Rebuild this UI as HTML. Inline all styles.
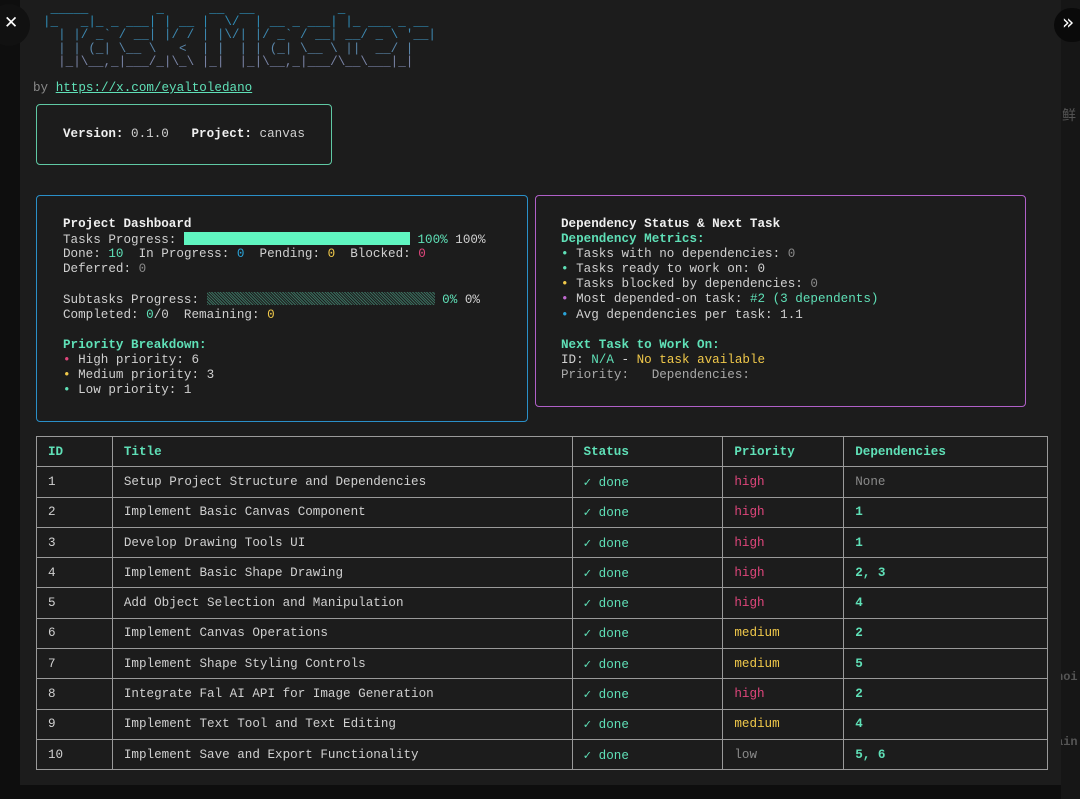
<!DOCTYPE html>
<html><head><meta charset="utf-8"><style>
*{margin:0;padding:0;box-sizing:border-box}
body{width:1080px;height:799px;background:#0e0e0e;position:relative;overflow:hidden;font-family:"Liberation Mono","DejaVu Sans Mono",monospace;font-size:12.6px;color:#d0d0d0}
.rstrip{position:absolute;left:1061px;top:0;width:19px;height:799px;background:#161616}
.panel{position:absolute;left:20px;top:0;width:1041px;height:785px;background:#1c1c1c}
.abs{position:absolute}
pre{font-family:inherit;white-space:pre}
.art{left:43px;top:3px;font-size:12.6px;line-height:13.2px;letter-spacing:0px}
.t{color:#5fe0b7}.p{color:#e0467c}.y{color:#f0c84a}.b{color:#2aa3d8}.m{color:#c06ad0}.g{color:#8a8a8a}.w{color:#f0f0f0;font-weight:bold}
.box{position:absolute;border:1.5px solid;border-radius:4px}
.lines div{height:15.1px;line-height:15.1px;white-space:pre}
table{position:absolute;left:36px;top:436px;width:1012px;border-collapse:collapse}
td{border:1.5px solid #9a9a9a;height:30.3px;padding:0 0 0 11px;white-space:pre;color:#d0d0d0}
th{border:1.5px solid #9a9a9a;height:30.3px;padding:0 0 0 11px;text-align:left;color:#5fe0b7}
</style></head><body>
<div class="rstrip"></div>
<div class="abs" style="left:1062px;top:105px;color:#555;font-size:14px">鲜</div>
<div class="abs" style="left:1056px;top:670px;color:#555;font-size:12px;font-weight:bold">noi</div>
<div class="abs" style="left:1056px;top:735px;color:#555;font-size:12px;font-weight:bold">ain</div>
<div class="panel"></div>
<div class="abs" style="left:-12px;top:4px;width:42px;height:42px;border-radius:21px;background:#111"></div>
<div class="abs" style="left:4px;top:13px;color:#fff;font-family:'Liberation Sans',sans-serif;font-size:17px">✕</div>
<div class="abs" style="left:1054px;top:8px;width:36px;height:34px;border-radius:17px;background:#0a0a0a"></div>
<div class="abs" style="left:1062px;top:10px;color:#fff;font-family:'DejaVu Sans',sans-serif;font-size:20px">»</div>
<pre class="abs art"><span style="color:#2f95c0"> _____         _      __  __           _
</span><span style="color:#2f8db8">|_   _|_ _ ___| | __ |  \/  | __ _ ___| |_ ___ _ __
</span><span style="color:#3d88b0">  | |/ _` / __| |/ / | |\/| |/ _` / __| __/ _ \ '__|
</span><span style="color:#5a86aa">  | | (_| \__ \   <  | |  | | (_| \__ \ ||  __/ |
</span><span style="color:#7a84a6">  |_|\__,_|___/_|\_\ |_|  |_|\__,_|___/\__\___|_|</span></pre>
<div class="abs" style="left:33px;top:81px;color:#8a8a8a">by <span class="t" style="text-decoration:underline">https://x.com/eyaltoledano</span></div>
<div class="box" style="left:36px;top:104px;width:296px;height:61px;border-color:#5fc9a4"></div>
<div class="abs" style="left:63px;top:127px;white-space:pre"><span class="w">Version:</span> 0.1.0   <span class="w">Project:</span> canvas</div>
<div class="box" style="left:36px;top:195px;width:492px;height:227px;border-color:#2a8fc8"></div>
<div class="abs lines" style="left:63px;top:217px">
<div class="w">Project Dashboard</div>
<div>Tasks Progress: <span style="display:inline-block;width:226px;height:13px;background:#5ff5c0;vertical-align:-2px"></span> <span class="t">100%</span> 100%</div>
<div>Done: <span class="t">10</span>  In Progress: <span class="b">0</span>  Pending: <span class="y">0</span>  Blocked: <span class="p">0</span></div>
<div>Deferred: <span class="g">0</span></div>
<div></div>
<div>Subtasks Progress: <span style="display:inline-block;width:228px;height:13px;background:repeating-linear-gradient(45deg,#3a6e5e 0 1px,#1c1c1c 1px 2px);vertical-align:-2px"></span> <span class="t">0%</span> 0%</div>
<div>Completed: <span class="t">0</span>/0  Remaining: <span class="y">0</span></div>
<div></div>
<div class="t" style="font-weight:bold">Priority Breakdown:</div>
<div><span class="p">•</span> High priority: 6</div>
<div><span class="y">•</span> Medium priority: 3</div>
<div><span class="t">•</span> Low priority: 1</div>
</div>
<div class="box" style="left:535px;top:195px;width:491px;height:212px;border-color:#b060c8"></div>
<div class="abs lines" style="left:561px;top:217px">
<div class="w">Dependency Status &amp; Next Task</div>
<div class="t" style="font-weight:bold">Dependency Metrics:</div>
<div><span class="t">•</span> Tasks with no dependencies: <span class="g">0</span></div>
<div><span class="t">•</span> Tasks ready to work on: 0</div>
<div><span class="y">•</span> Tasks blocked by dependencies: <span class="g">0</span></div>
<div><span class="m">•</span> Most depended-on task: <span class="t">#2 (3 dependents)</span></div>
<div><span class="b">•</span> Avg dependencies per task: 1.1</div>
<div></div>
<div class="t" style="font-weight:bold">Next Task to Work On:</div>
<div>ID: <span class="t">N/A</span> - <span class="y">No task available</span></div>
<div class="g" style="color:#a8a8a8">Priority:   Dependencies:</div>
</div>
<table>
<colgroup><col style="width:76px"><col style="width:460px"><col style="width:151px"><col style="width:121px"><col style="width:204px"></colgroup>
<tr><th>ID</th><th>Title</th><th>Status</th><th>Priority</th><th>Dependencies</th></tr>
<tr><td>1</td><td>Setup Project Structure and Dependencies</td><td class="t">✓ done</td><td class="p">high</td><td class="g">None</td></tr>
<tr><td>2</td><td>Implement Basic Canvas Component</td><td class="t">✓ done</td><td class="p">high</td><td class="t" style="font-weight:bold">1</td></tr>
<tr><td>3</td><td>Develop Drawing Tools UI</td><td class="t">✓ done</td><td class="p">high</td><td class="t" style="font-weight:bold">1</td></tr>
<tr><td>4</td><td>Implement Basic Shape Drawing</td><td class="t">✓ done</td><td class="p">high</td><td class="t" style="font-weight:bold">2, 3</td></tr>
<tr><td>5</td><td>Add Object Selection and Manipulation</td><td class="t">✓ done</td><td class="p">high</td><td class="t" style="font-weight:bold">4</td></tr>
<tr><td>6</td><td>Implement Canvas Operations</td><td class="t">✓ done</td><td class="y">medium</td><td class="t" style="font-weight:bold">2</td></tr>
<tr><td>7</td><td>Implement Shape Styling Controls</td><td class="t">✓ done</td><td class="y">medium</td><td class="t" style="font-weight:bold">5</td></tr>
<tr><td>8</td><td>Integrate Fal AI API for Image Generation</td><td class="t">✓ done</td><td class="p">high</td><td class="t" style="font-weight:bold">2</td></tr>
<tr><td>9</td><td>Implement Text Tool and Text Editing</td><td class="t">✓ done</td><td class="y">medium</td><td class="t" style="font-weight:bold">4</td></tr>
<tr><td>10</td><td>Implement Save and Export Functionality</td><td class="t">✓ done</td><td class="g">low</td><td class="t" style="font-weight:bold">5, 6</td></tr>
</table>
</body></html>
